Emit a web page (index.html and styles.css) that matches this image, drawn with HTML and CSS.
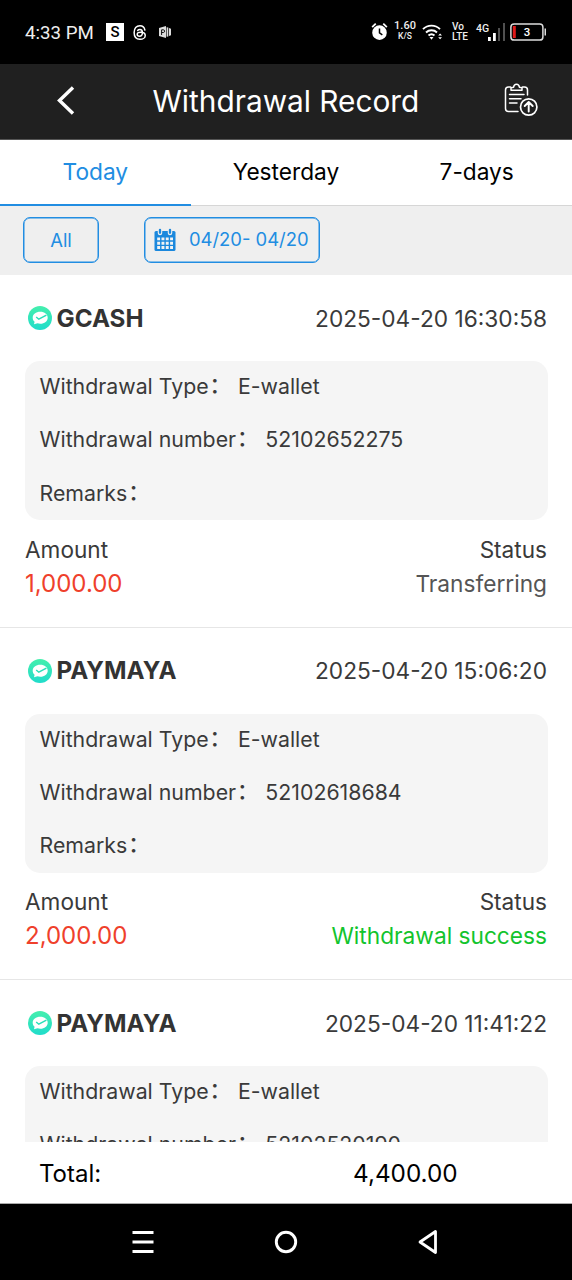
FILE: index.html
```html
<!DOCTYPE html>
<html lang="en">
<head>
<meta charset="utf-8">
<title>Withdrawal Record</title>
<link rel="stylesheet" href="styles.css">
</head>
<body>
<svg width="0" height="0" class="defs">
  <defs>
    <linearGradient id="mint" x1="0" y1="0" x2="0" y2="1"><stop offset="0" stop-color="#45efad"/><stop offset="1" stop-color="#20dccb"/></linearGradient>
    <symbol id="wallet" viewBox="0 0 24 24">
      <circle cx="12" cy="12" r="12" fill="url(#mint)"/>
      <path d="M12.3 5.8c4.300 0 7.400 2.500 7.400 5.900s-3.100 6-7.400 6c-1 0-2-.1-2.800-.4L6 18.200l.6-2.500c-1.200-1-1.900-2.400-1.900-4 0-3.400 3.200-5.900 7.600-5.900z" fill="#fff"/>
      <path d="M8.200 11l2.600 2.200 7.600-4.100" fill="none" stroke="#29dfb9" stroke-width="1.500"/>
    </symbol>
  </defs>
</svg>
<div class="screen">
  <div class="status">
    <span class="clock">4:33 PM</span>
    <span class="s-badge">S</span>
    <svg class="threads" viewBox="0 0 16 18" fill="none" stroke="#fff" stroke-width="1.700" stroke-linecap="round"><path d="M13.600 6.200C13 3 11.100 1.200 8 1.200 3.800 1.200 1.300 4.100 1.300 9s2.500 7.800 6.700 7.800c3.300 0 6-1.800 6-4.500 0-2.500-2.300-3.700-5.200-3.700-2.400 0-4 .8-4 2.400 0 1.400 1.200 2.200 2.700 2.200 2.100 0 3.300-1.400 3.300-4.100 0-2.300-1-3.600-2.900-3.600-1.200 0-2 .4-2.600 1.200"/></svg>
    <svg class="office" viewBox="0 0 12 12"><path d="M0 2l7-2v12L0 10zM7.600 1.200l1.700.4v8.800l-1.700.4zM10 2l2 .8v6.400l-2 .8z" fill="#ddd"/><path d="M2.600 9V3.800h1.700c1.800 0 1.800 2.700 0 2.700H2.600" fill="none" stroke="#111" stroke-width="1"/></svg>
    <div class="status-right">
      <svg class="alarm" viewBox="0 0 18 20"><circle cx="9" cy="11.200" r="7.700" fill="#fff"/><path d="M1.200 5.300L5 1.700M13 1.700l3.800 3.600" stroke="#fff" stroke-width="1.900"/><path d="M9 6.700v4.800l3 2" fill="none" stroke="#000" stroke-width="1.600"/></svg>
      <span class="duo speed"><b>1.60</b><i>K/S</i></span>
      <svg class="wifi" viewBox="0 0 22 18" fill="none" stroke="#fff" stroke-width="1.900"><path d="M1 6.200a12 12 0 0 1 17 0M4 9.500a8 8 0 0 1 11 0M6.500 12.500a4.500 4.500 0 0 1 6 0"/><path d="M7.500 14h4l-2 2.700z" fill="#fff" stroke="none"/><path d="M16.200 12.500l1.900-2 1.900 2zM16.200 14.300l1.900 2 1.900-2z" fill="#fff" stroke="none"/></svg>
      <span class="duo volte"><b>Vo</b><i>LTE</i></span>
      <span class="net">4G</span>
      <svg class="signal" viewBox="0 0 17 18"><path d="M0 14h2.800V18H0zM5 10h2.800v8H5z" fill="#fff"/><path d="M10 5h2V18h-2zM15 0h2v18h-2z" fill="#505050"/></svg>
      <svg class="battery" viewBox="0 0 37 18"><rect x=".9" y=".9" width="32" height="16.200" rx="3.200" fill="none" stroke="#ddd" stroke-width="1.500"/><path d="M2.800 3h3v12h-3z" fill="#e01a1a"/><path d="M34.500 5.500h1.500v7h-1.500z" fill="#ddd"/><text x="17" y="13.300" class="bat-num">3</text></svg>
    </div>
  </div>

  <header class="header">
    <svg class="back" viewBox="0 0 18 29"><path d="M16 1.500L2.500 14.500 16 27.500" fill="none" stroke="#fff" stroke-width="3.400"/></svg>
    <h1 class="title">Withdrawal Record</h1>
    <svg class="clip" viewBox="0 0 34 34" fill="none" stroke="#fff" stroke-width="1.500" stroke-linecap="round" stroke-linejoin="round"><path d="M6.500 4H4.500Q1.500 4 1.500 7v18.500q0 3 3 3H14M18.500 4h2q3 0 3 3v5M7 7.200V4.800l2.600-.6Q10 1.200 12.500 1.200T15.400 4.200l2.600.6v2.400zM5.500 11.500H20M5.500 15.800H17M5.500 20H13"/><circle cx="24.700" cy="24" r="8.200" stroke-width="1.700"/><path d="M24.700 28.500v-9M20.700 23l4-4 4 4" stroke-width="1.900"/></svg>
  </header>

  <nav class="tabs">
    <div class="tab active"><span>Today</span></div>
    <div class="tab"><span>Yesterday</span></div>
    <div class="tab"><span>7-days</span></div>
  </nav>

  <div class="filters">
    <div class="pill all">All</div>
    <div class="pill range">
      <svg class="cal" viewBox="0 0 22 24"><rect x=".5" y="3" width="21" height="20" rx="1.500" fill="#1b88dd"/><path d="M3.200 10.900h16M3.200 15.200h16M3.200 19.500h16" stroke="#f3f3f3" stroke-width="2.900" stroke-dasharray="2.900 1.400"/><path d="M6 1.500V5M16 1.500V5" stroke="#efefef" stroke-width="4.500" stroke-linecap="round"/><path d="M6 1.800v3M16 1.800v3" stroke="#1b88dd" stroke-width="2.300" stroke-linecap="round"/></svg>
      <span>04/20- 04/20</span>
    </div>
  </div>

  <main class="list">
    <section class="record">
      <div class="head"><svg class="coin"><use href="#wallet"/></svg><strong>GCASH</strong><time>2025-04-20 16:30:58</time></div>
      <div class="box"><p>Withdrawal Type<span class="colon">：</span> E-wallet</p><p>Withdrawal number<span class="colon">：</span> 52102652275</p><p>Remarks<span class="colon">：</span></p></div>
      <div class="pair labels"><span>Amount</span><span>Status</span></div>
      <div class="pair values"><span class="amount">1,000.00</span><span class="pending">Transferring</span></div>
    </section>
    <section class="record">
      <div class="head"><svg class="coin"><use href="#wallet"/></svg><strong>PAYMAYA</strong><time>2025-04-20 15:06:20</time></div>
      <div class="box"><p>Withdrawal Type<span class="colon">：</span> E-wallet</p><p>Withdrawal number<span class="colon">：</span> 52102618684</p><p>Remarks<span class="colon">：</span></p></div>
      <div class="pair labels"><span>Amount</span><span>Status</span></div>
      <div class="pair values"><span class="amount">2,000.00</span><span class="success">Withdrawal success</span></div>
    </section>
    <section class="record">
      <div class="head"><svg class="coin"><use href="#wallet"/></svg><strong>PAYMAYA</strong><time>2025-04-20 11:41:22</time></div>
      <div class="box"><p>Withdrawal Type<span class="colon">：</span> E-wallet</p><p>Withdrawal number<span class="colon">：</span> 52102520190</p></div>
    </section>
  </main>

  <footer class="total"><span>Total:</span><span class="sum">4,400.00</span></footer>

  <div class="sysnav">
    <svg viewBox="0 0 26 26" fill="none" stroke="#fff"><path d="M2.500 3.500h21M2.500 13h21M2.500 22.500h21" stroke-width="3"/></svg>
    <svg viewBox="0 0 26 26" fill="none" stroke="#fff"><circle cx="13" cy="13" r="9.700" stroke-width="2.900"/></svg>
    <svg viewBox="0 0 26 26" fill="none" stroke="#fff"><path d="M19.500 2.500v21L4 13z" stroke-width="2.800" stroke-linejoin="round"/></svg>
  </div>
</div>
</body>
</html>
```
FILE: styles.css
```css
* { box-sizing: border-box; }
body { margin: 0; font-family: Inter, "Noto Sans CJK SC", sans-serif; color: #3a3a3a; background: #fff; }
svg { display: block; flex: none; }
.defs { height: 0; }
.screen { width: 572px; height: 1280px; display: flex; flex-direction: column; overflow: hidden; }
.screen > * { flex: none; }

.status { height: 64px; background: #000; color: #eee; display: flex; align-items: center; padding-left: 25px; font-family: Roboto, sans-serif; }
.clock { font-size: 18.700px; width: 81px; white-space: nowrap; padding-top: 1px; }
.s-badge { width: 18px; height: 18px; background: #fff; color: #000; font-size: 15px; line-height: 18px; text-align: center; font-weight: 500; }
.threads { width: 14px; height: 17px; margin-left: 9px; }
.office { width: 12px; height: 12px; margin-left: 12px; }
.status-right { margin-left: auto; display: flex; align-items: center; padding-right: 25px; }
.alarm { width: 17px; height: 19px; margin-right: 6px; margin-top: -2px; }
.duo { display: flex; flex-direction: column; align-items: center; font-weight: 500; }
.duo b, .duo i { font-style: normal; font-weight: 500; line-height: 10px; font-size: 11px; }
.speed { width: 22px; margin-right: 6px; margin-top: -2px; }
.speed i { font-size: 8.500px; }
.volte { width: 17px; margin-left: 8px; margin-right: 7px; align-items: flex-start; }
.volte b { font-size: 10px; }
.volte i { font-size: 10px; }
.wifi { width: 22px; height: 18px; }
.net { font-size: 10.500px; font-weight: 500; width: 12px; margin-top: -7px; }
.signal { width: 17px; height: 18px; margin-right: 5px; }
.battery { width: 37px; height: 18px; }
.bat-num { font: 500 11.500px Roboto, sans-serif; fill: #fff; text-anchor: middle; }

.header { height: 76px; background: #202020; color: #fff; border-bottom: 1px solid #555; display: flex; align-items: center; padding: 0 34px 2px 57px; }
.back { width: 18px; height: 29px; }
.title { margin: 0; flex: 1; padding-left: 77.500px; font-size: 29.800px; line-height: 36px; font-weight: 400; white-space: nowrap; }
.clip { width: 34px; height: 34px; margin-top: -2px; }

.tabs { height: 66px; display: grid; grid-template-columns: 190.600px 1fr 190.600px; color: #000; border-bottom: 1px solid #d6d6d6; font-size: 22.700px; }
.tab { display: flex; justify-content: center; align-items: center; height: 66px; padding-bottom: 3px; }
.active { color: #218de2; border-bottom: 2px solid #218de2; padding-bottom: 1px; }

.filters { height: 69px; background: #efefef; display: flex; gap: 45px; padding: 11px 23px; }
.pill { height: 46px; border: 1.500px solid #218de2; border-radius: 7px; color: #218de2; display: flex; align-items: center; font-size: 18.400px; box-shadow: inset 0 0 0 .5px #218de2; }
.all { width: 76px; justify-content: center; }
.range { width: 176px; padding-left: 9px; gap: 13px; white-space: nowrap; }
.range span { padding-bottom: 2px; }
.cal { width: 22px; height: 24px; }

.list { height: 867px; overflow: hidden; }
.record { height: 352.600px; border-bottom: 1px solid #e6e6e6; padding: 0 25px; }
.head { height: 86px; display: flex; align-items: center; padding-left: 3px; font-size: 22.700px; }
.coin { width: 24px; height: 24px; margin-right: 4.500px; }
.head strong { font-size: 24.200px; font-weight: 650; color: #333; }
.head time { margin-left: auto; }
.box { height: 159px; background: #f5f5f5; border-radius: 15px; margin: 0 -.5px; padding-left: 15px; font-size: 21.300px; }
.box p { margin: 0; height: 53.300px; line-height: 50.500px; white-space: nowrap; }
.colon { font-weight: 500; margin: 0 1px; line-height: 1; vertical-align: 1px; }
.pair { display: flex; justify-content: space-between; line-height: 34px; }
.labels { padding-top: 12.500px; font-size: 22.600px; }
.values { font-size: 22.700px; }
.amount { color: #ef402b; font-size: 24px; }
.pending { color: #555; }
.success { color: #12c42d; }

.total { height: 62px; padding: 1px 0 0 39px; display: flex; align-items: center; color: #000; font-size: 24px; background: #fff; border-bottom: 1px solid #aaa; }
.total span:first-child { width: 314px; }
.sum { font-size: 24.300px; }
.sysnav { height: 76px; background: #000; display: flex; justify-content: center; align-items: center; gap: 117px; }
.sysnav svg { width: 26px; height: 26px; }
```
